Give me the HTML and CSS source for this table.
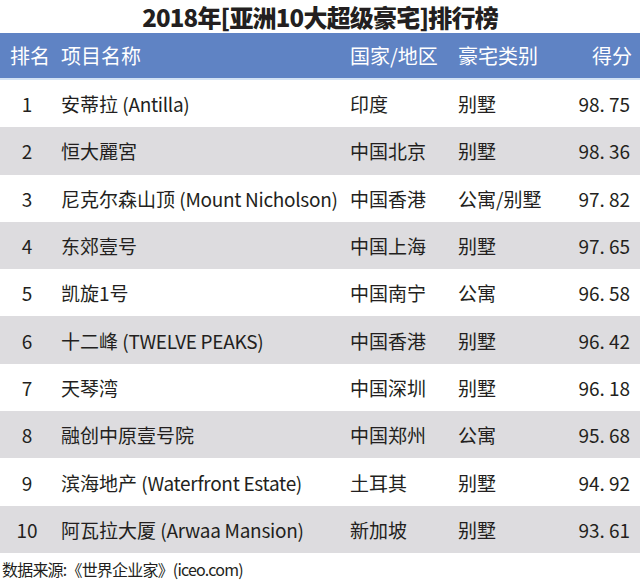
FILE: index.html
```html
<!DOCTYPE html>
<html lang="zh-CN">
<head>
<meta charset="utf-8">
<title>2018年[亚洲10大超级豪宅]排行榜</title>
<link rel="stylesheet" href="styles.css">
</head>
<body>
<div class="page">
  <h1 class="title">2018年[亚洲10大超级豪宅]排行榜</h1>
  <div class="table">
    <div class="row head">
      <div class="c-rank">排名</div>
      <div class="c-name">项目名称</div>
      <div class="c-country">国家/地区</div>
      <div class="c-type">豪宅类别</div>
      <div class="c-score">得分</div>
    </div>
    <div class="row">
      <div class="c-rank">1</div>
      <div class="c-name">安蒂拉 <span class="en">(Antilla)</span></div>
      <div class="c-country">印度</div>
      <div class="c-type">别墅</div>
      <div class="c-score">98<span class="dot">.</span>75</div>
    </div>
    <div class="row alt">
      <div class="c-rank">2</div>
      <div class="c-name">恒大麗宮</div>
      <div class="c-country">中国北京</div>
      <div class="c-type">别墅</div>
      <div class="c-score">98<span class="dot">.</span>36</div>
    </div>
    <div class="row">
      <div class="c-rank">3</div>
      <div class="c-name">尼克尔森山顶 <span class="en">(Mount Nicholson)</span></div>
      <div class="c-country">中国香港</div>
      <div class="c-type">公寓/别墅</div>
      <div class="c-score">97<span class="dot">.</span>82</div>
    </div>
    <div class="row alt">
      <div class="c-rank">4</div>
      <div class="c-name">东郊壹号</div>
      <div class="c-country">中国上海</div>
      <div class="c-type">别墅</div>
      <div class="c-score">97<span class="dot">.</span>65</div>
    </div>
    <div class="row">
      <div class="c-rank">5</div>
      <div class="c-name">凯旋1号</div>
      <div class="c-country">中国南宁</div>
      <div class="c-type">公寓</div>
      <div class="c-score">96<span class="dot">.</span>58</div>
    </div>
    <div class="row alt">
      <div class="c-rank">6</div>
      <div class="c-name">十二峰 <span class="en">(TWELVE PEAKS)</span></div>
      <div class="c-country">中国香港</div>
      <div class="c-type">别墅</div>
      <div class="c-score">96<span class="dot">.</span>42</div>
    </div>
    <div class="row">
      <div class="c-rank">7</div>
      <div class="c-name">天琴湾</div>
      <div class="c-country">中国深圳</div>
      <div class="c-type">别墅</div>
      <div class="c-score">96<span class="dot">.</span>18</div>
    </div>
    <div class="row alt">
      <div class="c-rank">8</div>
      <div class="c-name">融创中原壹号院</div>
      <div class="c-country">中国郑州</div>
      <div class="c-type">公寓</div>
      <div class="c-score">95<span class="dot">.</span>68</div>
    </div>
    <div class="row">
      <div class="c-rank">9</div>
      <div class="c-name">滨海地产 <span class="en">(Waterfront Estate)</span></div>
      <div class="c-country">土耳其</div>
      <div class="c-type">别墅</div>
      <div class="c-score">94<span class="dot">.</span>92</div>
    </div>
    <div class="row alt">
      <div class="c-rank">10</div>
      <div class="c-name">阿瓦拉大厦 <span class="en">(Arwaa Mansion)</span></div>
      <div class="c-country">新加坡</div>
      <div class="c-type">别墅</div>
      <div class="c-score">93<span class="dot">.</span>61</div>
    </div>
  </div>
  <p class="source">数据来源:《世界企业家》(iceo.com)</p>
</div>
</body>
</html>
```

FILE: styles.css
```css
html, body {
  margin: 0;
  padding: 0;
  background: #ffffff;
}

.page {
  width: 640px;
  height: 583px;
  overflow: hidden;
  font-family: "Noto Sans CJK SC", "Noto Sans", sans-serif;
  color: #231f20;
}

.title {
  margin: 0;
  height: 33px;
  line-height: 33px;
  text-align: center;
  font-size: 24px;
  font-weight: 900;
  letter-spacing: -0.8px;
  color: #231f20;
}

.table {
  display: flex;
  flex-direction: column;
}

.row {
  display: grid;
  grid-template-columns: 54px 296px 108px 102px 72px;
  align-items: center;
  height: 47.3px;
  font-size: 19px;
  padding-right: 8px;
}

.row.alt {
  background: #dddcdf;
}

.row.head {
  height: 45px;
  background: #5f83c4;
  color: #ffffff;
  font-size: 20px;
  border-bottom: 2px solid #d3e2f4;
}

.c-rank {
  text-align: center;
}

.head .c-rank {
  text-align: left;
  padding-left: 10px;
}

.c-name {
  padding-left: 7px;
  white-space: nowrap;
}

.en {
  letter-spacing: -0.3px;
}

.c-score {
  text-align: right;
  padding-right: 2px;
}

.head .c-score {
  padding-right: 0;
}

.dot {
  margin-right: 4px;
}

.source {
  margin: 0;
  height: 30px;
  line-height: 32px;
  padding-left: 2px;
  font-size: 16px;
  letter-spacing: -0.8px;
  color: #231f20;
}
```
